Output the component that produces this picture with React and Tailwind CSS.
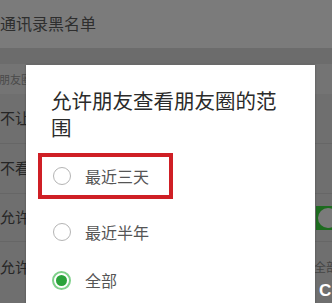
const font = { fontFamily: '"Noto Sans CJK SC", "Noto Sans", sans-serif' }

function Radio({ checked }) {
  if (checked) {
    return (
      <span className="flex h-[19px] w-[19px] items-center justify-center rounded-full border-2 border-[#7fd08a] bg-white">
        <span className="h-[11px] w-[11px] rounded-full bg-[#2aa33a]" />
      </span>
    )
  }
  return <span className="h-[18px] w-[18px] rounded-full border-[1.5px] border-[#b4b4b4] bg-white" />
}

export default function App() {
  return (
    <div className="relative h-[303px] w-[332px] overflow-hidden bg-[#6f6f6f]" style={font}>
      {/* page behind the dialog */}
      <div className="flex h-[48px] items-start bg-[#7b7b7b] pt-[11px] text-[16px] leading-[24px] text-[#2e2e2e]">
        <span>通讯录黑名单</span>
      </div>
      <div className="h-[16px] bg-[#6c6c6c]" />
      <div className="flex h-[30px] items-center bg-[#747474] text-[11px] text-[#4a4a4a]">
        <span className="-ml-[1px]">朋友圈</span>
      </div>
      <div className="flex flex-col text-[15px] text-[#262626]">
        <div className="flex h-[50px] items-center border-b border-[#666]">不让他看</div>
        <div className="flex h-[50px] items-center border-b border-[#666]">不看他</div>
        <div className="flex h-[48px] items-center justify-between border-b border-[#666]">
          <span>允许陌生人</span>
          <span className="mr-[-8px] flex h-[24px] w-[24px] items-center justify-start bg-[#1d6b1f] pl-[2px]">
            <span className="h-[20px] w-[20px] rounded-full bg-[#7a7a7a]" />
          </span>
        </div>
        <div className="flex h-[50px] items-center justify-between">
          <span>允许朋友</span>
          <span className="mr-[-6px] text-[12px] text-[#444]">全部</span>
        </div>
      </div>
      <span className="absolute left-[319px] top-[278px] text-[17px] font-bold text-white" style={{ fontFamily: '"Liberation Sans", sans-serif' }}>
        C
      </span>

      {/* dialog */}
      <div className="absolute left-[26px] top-[65px] h-[260px] w-[289px] bg-white shadow-[0_0_2px_rgba(0,0,0,0.3)]">
        <div className="px-[25px] pt-[22px] text-[20.5px] leading-[27px] text-[#2b2b2b]">
          允许朋友查看朋友圈的范围
        </div>
        <div className="mt-[12px] flex flex-col">
          <div className="ml-[12px] flex h-[46px] w-[135px] items-center gap-[14px] border-[4px] border-[#cf1f25] pl-[11px]">
            <Radio />
            <span className="text-[16px] text-[#555]">最近三天</span>
          </div>
          <div className="mt-[12px] flex h-[42px] items-center gap-[14px] pl-[27px]">
            <Radio />
            <span className="text-[16px] text-[#555]">最近半年</span>
          </div>
          <div className="mt-[6px] flex h-[42px] items-center gap-[14px] pl-[26px]">
            <Radio checked />
            <span className="text-[16px] text-[#555]">全部</span>
          </div>
        </div>
      </div>
    </div>
  )
}
